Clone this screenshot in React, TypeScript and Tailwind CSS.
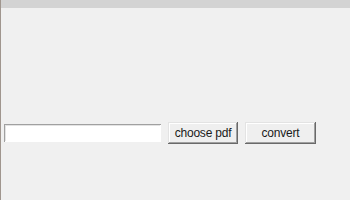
export default function App() {
  return (
    <div
      className="w-[350px] h-[200px] bg-[#f0f0f0] border-l border-[#a0968e] flex flex-col"
      style={{ fontFamily: '"Liberation Sans", Arial, sans-serif' }}
    >
      {/* Top strip */}
      <div className="h-[8px] bg-[#d3d3d3]" />

      {/* Controls row */}
      <div className="mt-[114px] pl-[3px] flex items-center h-[22px]">
        <input
          type="text"
          className="w-[157px] h-[18px] bg-white outline-none px-1 text-[12px] shadow-[inset_1px_1px_#a0a0a0,inset_-1px_-1px_#ffffff,inset_2px_2px_#e3e3e3]"
        />
        <button className="ml-[7px] w-[70px] h-[22px] bg-[#efefef] text-[12px] tracking-[-0.2px] text-[#1a1a1a] shadow-[inset_-1px_-1px_#696969,inset_1px_1px_#e3e3e3,inset_-2px_-2px_#a0a0a0,inset_2px_2px_#ffffff]">
          choose pdf
        </button>
        <button className="ml-[7px] w-[71px] h-[22px] bg-[#efefef] text-[12px] tracking-[-0.2px] text-[#1a1a1a] shadow-[inset_-1px_-1px_#696969,inset_1px_1px_#e3e3e3,inset_-2px_-2px_#a0a0a0,inset_2px_2px_#ffffff]">
          convert
        </button>
      </div>
    </div>
  );
}
